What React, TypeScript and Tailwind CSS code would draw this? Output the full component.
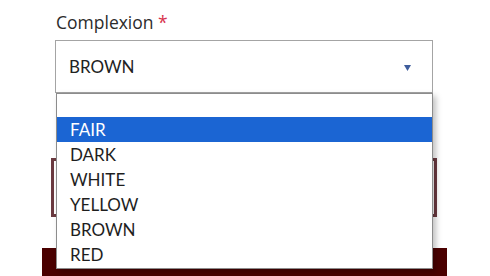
const options = ["FAIR", "DARK", "WHITE", "YELLOW", "BROWN", "RED"]

export default function App() {
  const selected = "FAIR"

  return (
    <div className="relative h-[276px] w-[490px] overflow-hidden bg-white">
      <div className="flex flex-col">
        <label className="ml-[56px] pt-[10px] text-[17.5px] leading-[24px] text-[#2b2b2b] [font-family:'Open_Sans',sans-serif]">
          Complexion <span className="text-[#d8334d]">*</span>
        </label>

        <div className="ml-[55px] mt-[6px] flex h-[53px] w-[378px] items-center justify-between border border-[#a4a4a4] bg-white pl-[13px] pr-[21px] [font-family:Lato,sans-serif] text-[17px] text-[#222]">
          <span>BROWN</span>
          <svg width="7" height="6" viewBox="0 0 7 6" className="mt-[2px]">
            <path d="M0 0 H7 L3.5 6 Z" fill="#3f5d9c" />
          </svg>
        </div>

        <div className="ml-[51px] mt-[65px] h-[59px] w-[386px] border-[3px] border-[#6b3a40]" />

        <div className="ml-[42px] mt-[31px] h-[30px] w-[405px] bg-[#4a0000]" />
      </div>

      <ul className="absolute left-[56px] top-[93px] w-[377px] border border-[#8c8c8c] bg-white pt-[23px] pb-[1px] shadow-[3px_3px_6px_rgba(0,0,0,0.25)] [font-family:Lato,sans-serif] text-[17px] text-[#1e1e1e]">
        {options.map((opt) => (
          <li
            key={opt}
            className={`h-[25px] pl-[13px] leading-[25px] ${
              opt === selected ? "bg-[#1b65d3] text-white" : ""
            }`}
          >
            {opt}
          </li>
        ))}
      </ul>
    </div>
  )
}
